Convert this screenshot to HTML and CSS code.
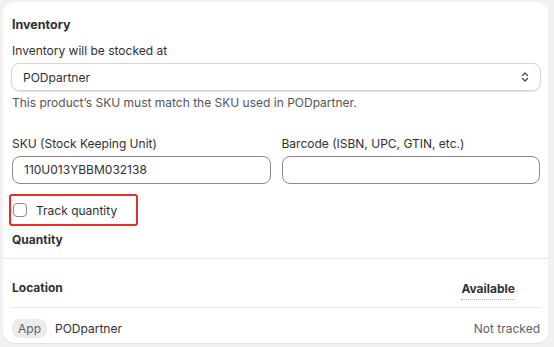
FILE: index.html
```html
<!DOCTYPE html>
<html lang="en">
<head>
    <meta charset="UTF-8">
    <title>Inventory</title>
    <link rel="stylesheet" href="styles.css">
</head>
<body>
    <div class="card">
        <div class="section">
            <h2 class="title">Inventory</h2>
            <label class="label">Inventory will be stocked at</label>
            <div class="select">
                <span>PODpartner</span>
                <svg width="12" height="12" viewBox="0 0 12 12">
                    <path d="M3.5 4.5 6 2l2.5 2.5M3.5 7.5 6 10l2.5-2.5" fill="none" stroke="#4a4a4a" stroke-width="1.3" stroke-linecap="round" stroke-linejoin="round"/>
                </svg>
            </div>
            <p class="help">This product’s SKU must match the SKU used in PODpartner.</p>

            <div class="fields">
                <div class="field">
                    <label class="label">SKU (Stock Keeping Unit)</label>
                    <div class="input">110U013YBBM032138</div>
                </div>
                <div class="field">
                    <label class="label">Barcode (ISBN, UPC, GTIN, etc.)</label>
                    <div class="input"></div>
                </div>
            </div>

            <div class="track">
                <span class="checkbox"></span>
                <span>Track quantity</span>
            </div>
            <h3 class="subtitle">Quantity</h3>
        </div>

        <div class="table">
            <div class="row head">
                <span>Location</span>
                <span class="dotted">Available</span>
            </div>
            <div class="row">
                <span class="loc"><span class="badge">App</span>PODpartner</span>
                <span class="muted">Not tracked</span>
            </div>
        </div>
    </div>
</body>
</html>
```

FILE: styles.css
```css
body {
    margin: 0;
    background: #f1f1f1;
    font-family: Inter, "Noto Sans", sans-serif;
    font-size: 12px;
    color: #303030;
}

.card {
    background: #fff;
    margin: 2px 6px 4px 3px;
    height: 341px;
    border-radius: 12px;
    box-shadow: 0 1px 0 #e3e3e3;
    overflow: hidden;
}

.section {
    padding: 14px 8px 0 9px;
}

.title {
    font-size: 12.5px;
    font-weight: 650;
    margin: 0;
    line-height: 17px;
}

.label {
    display: block;
    margin: 10px 0 0;
    line-height: 16px;
}

.select {
    display: flex;
    justify-content: space-between;
    align-items: center;
    margin: 4px -1px 0 -1px;
    height: 26px;
    padding: 0 9px 0 11px;
    border: 1px solid #d4d4d4;
    border-radius: 8px;
    box-shadow: 0 1px 0 #e6e6e6;
}

.help {
    margin: 4px 0 0;
    line-height: 16px;
    color: #545454;
}

.fields {
    display: grid;
    grid-template-columns: 1fr 1fr;
    gap: 11px;
    margin-top: 25px;
}

.fields .label {
    margin: 0 0 4px;
}

.input {
    height: 26px;
    line-height: 26px;
    border: 1px solid #8a8a8a;
    border-radius: 8px;
    padding: 0 11px;
}

.track {
    display: flex;
    align-items: center;
    gap: 9px;
    margin: 10px 0 0 -3px;
    width: 123px;
    height: 28px;
    padding: 0 0 0 2px;
    border: 2px solid #e0302c;
    border-radius: 3px;
}

.checkbox {
    width: 12px;
    height: 12px;
    border: 1px solid #8a8a8a;
    border-radius: 4px;
}

.subtitle {
    font-size: 12px;
    font-weight: 650;
    margin: 6px 0 0;
    line-height: 16px;
}

.table {
    margin-top: 10px;
    border-top: 1px solid #e6e6e6;
}

.row {
    display: flex;
    justify-content: space-between;
    align-items: center;
    margin: 0 8px 0 9px;
}

.row.head {
    height: 40px;
    padding: 8px 25px 0 0;
    font-weight: 650;
    border-bottom: 1px solid #e6e6e6;
}

.dotted {
    border-bottom: 1px dotted #b5b5b5;
    padding-bottom: 3px;
    margin-top: 6px;
}

.row:last-child {
    height: 40px;
}

.loc {
    display: flex;
    align-items: center;
    gap: 8px;
}

.badge {
    background: #ebebeb;
    color: #616161;
    border-radius: 8px;
    padding: 2px 6px;
}

.muted {
    color: #616161;
}
```
